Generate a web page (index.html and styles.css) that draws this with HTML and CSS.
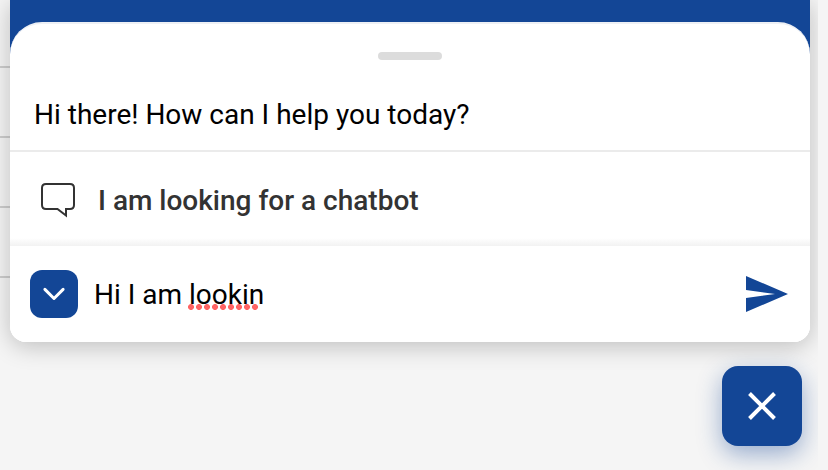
FILE: index.html
```html
<!DOCTYPE html>
<html lang="en">
<head>
<meta charset="utf-8">
<title>Chat</title>
<link rel="stylesheet" href="styles.css">
</head>
<body>
<div class="page">
  <div class="rules"><i></i><i></i><i></i><i></i></div>
  <main class="widget">
    <section class="chat">
      <div class="sheet">
        <div class="handle"></div>
        <p class="greeting"><span class="greeting-text">Hi there! How can I help you today?</span></p>
        <div class="suggestion">
          <svg class="bubble" width="36" height="36" viewBox="0 0 36 36" fill="none" stroke="#333" stroke-width="2"><path d="M6 2H30Q34 2 34 6V23Q34 27 30 27H26V33.500L17.500 27H6Q2 27 2 23V6Q2 2 6 2Z"/></svg>
          <span class="suggestion-text">I am looking for a chatbot</span>
        </div>
        <div class="composer">
          <button class="toggle" aria-label="Collapse"><svg width="48" height="48" viewBox="0 0 48 48" fill="none" stroke="#fff" stroke-width="3" stroke-linecap="round" stroke-linejoin="round"><path d="M14.900 19.400L24 28.500L33.100 19.400"/></svg></button>
          <span class="message">Hi I am <span class="typo">lookin</span></span>
          <svg class="send" width="42" height="36" viewBox="0 0 42 36" fill="#134696"><path d="M0 0L42 18L0 36V22L29 18L0 14Z"/></svg>
        </div>
      </div>
    </section>
    <button class="close" aria-label="Close"><svg width="80" height="80" viewBox="0 0 80 80" fill="none" stroke="#fff" stroke-width="4"><path d="M27.500 27.500L52.500 52.500M52.500 27.500L27.500 52.500"/></svg></button>
  </main>
</div>
</body>
</html>
```
FILE: styles.css
```css
* { box-sizing: border-box; }
body { margin: 0; font-family: Roboto, sans-serif; font-size: 28px; color: #000; }
button { border: 0; padding: 0; background: #134696; }
svg { display: block; flex: none; }
.page { display: grid; width: 828px; height: 470px; overflow: hidden; background: #f5f5f5; }
.rules, .widget { grid-area: 1 / 1; }
.rules { width: 12px; padding-top: 66px; display: flex; flex-direction: column; gap: 68px; }
.rules i { height: 2px; background: #cdcdcd; }
.widget { width: 818px; padding-left: 10px; display: flex; flex-direction: column; overflow: hidden; }
.chat { width: 800px; height: 342px; padding-top: 22px; border-radius: 0 0 16px 16px; background: linear-gradient(#134696 60px, #fff 60px); box-shadow: 0 4px 24px rgba(0, 0, 0, .23); }
.sheet { height: 320px; border-radius: 32px 32px 16px 16px; background: #fff; border-top: 2px solid #edf0f5; overflow: hidden; display: flex; flex-direction: column; }
.handle { width: 64px; height: 8px; margin: 28px auto 0; border-radius: 4px; background: #dcdcdc; flex: none; }
.greeting { margin: 0; height: 92px; padding: 38px 24px 0; line-height: 34px; border-bottom: 2px solid #ebebeb; white-space: nowrap; flex: none; }
.suggestion { height: 94px; flex: none; display: flex; align-items: center; gap: 22px; padding: 2px 30px 0; color: #333; font-weight: 500; background: linear-gradient(#fff 86px, #f2f2f2 94px); }
.composer { flex: 1; display: flex; align-items: center; padding: 0 22px 0 20px; }
.toggle { width: 48px; height: 48px; border-radius: 12px; }
.message { flex: 1; padding: 2px 0 0 16px; line-height: 34px; white-space: nowrap; }
.typo { display: inline-block; position: relative; }
.typo::after { content: ""; position: absolute; left: -1px; top: 26px; width: 72px; height: 6px; background: radial-gradient(circle at 3px 3px, #ff6464 2.600px, transparent 3.300px) 0 0 / 8px 6px; }
.close { width: 80px; height: 80px; margin: 24px 0 0 712px; border-radius: 16px; box-shadow: 0 8px 24px rgba(19, 70, 150, .42); }
```
